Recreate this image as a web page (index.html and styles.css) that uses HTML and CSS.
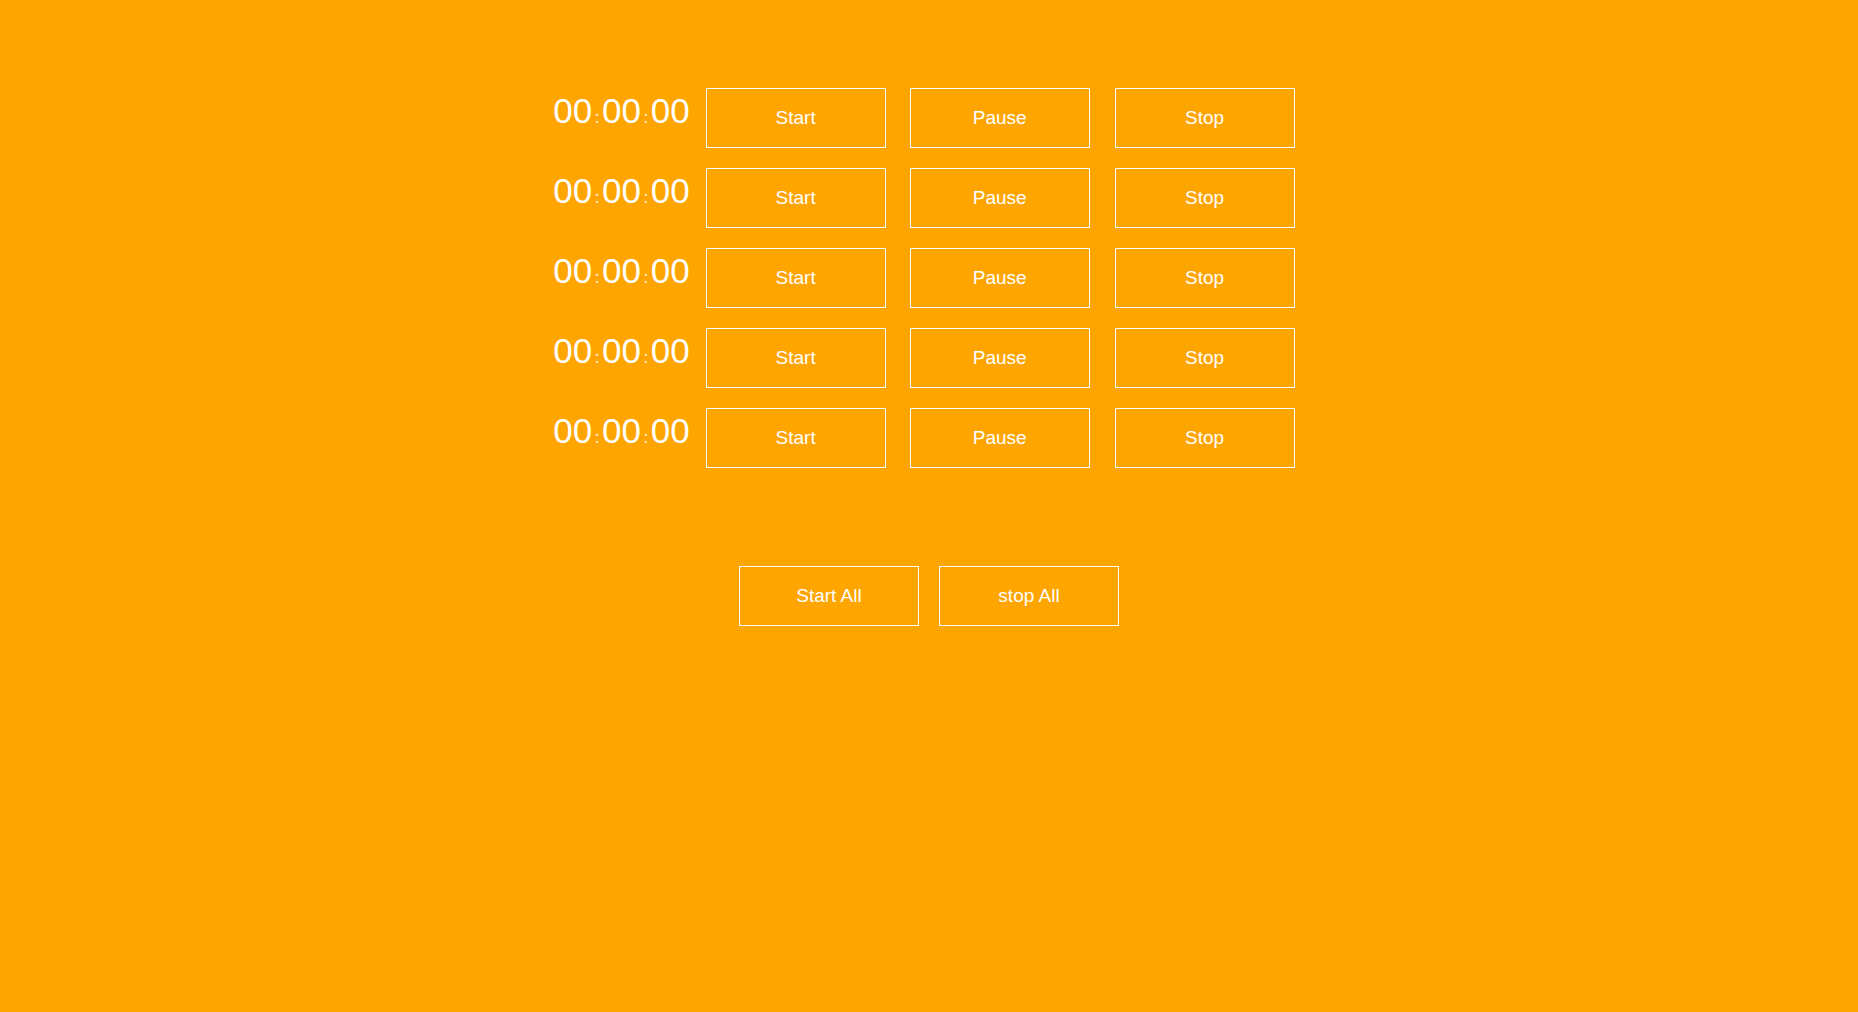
FILE: index.html
```html
<!DOCTYPE html>
<html lang="en">
<head>
<meta charset="utf-8">
<title>Timers</title>
<link rel="stylesheet" href="styles.css">
</head>
<body>
<main class="page">
  <section class="timers">
    <div class="row">
      <div class="time">00<span class="sep">:</span>00<span class="sep">:</span>00</div>
      <button class="btn">Start</button>
      <button class="btn">Pause</button>
      <button class="btn">Stop</button>
    </div>
    <div class="row">
      <div class="time">00<span class="sep">:</span>00<span class="sep">:</span>00</div>
      <button class="btn">Start</button>
      <button class="btn">Pause</button>
      <button class="btn">Stop</button>
    </div>
    <div class="row">
      <div class="time">00<span class="sep">:</span>00<span class="sep">:</span>00</div>
      <button class="btn">Start</button>
      <button class="btn">Pause</button>
      <button class="btn">Stop</button>
    </div>
    <div class="row">
      <div class="time">00<span class="sep">:</span>00<span class="sep">:</span>00</div>
      <button class="btn">Start</button>
      <button class="btn">Pause</button>
      <button class="btn">Stop</button>
    </div>
    <div class="row">
      <div class="time">00<span class="sep">:</span>00<span class="sep">:</span>00</div>
      <button class="btn">Start</button>
      <button class="btn">Pause</button>
      <button class="btn">Stop</button>
    </div>
  </section>
  <div class="all">
    <button class="btn">Start All</button>
    <button class="btn">stop All</button>
  </div>
</main>
</body>
</html>
```
FILE: styles.css
```css
html, body {
  margin: 0;
  padding: 0;
  height: 100%;
}
body {
  background: #FFA500;
  color: #fff;
  font-family: "Liberation Sans", Arial, sans-serif;
}
.page {
  padding-top: 88px;
}
.timers {
  display: flex;
  flex-direction: column;
  align-items: center;
  gap: 20px;
}
.row {
  display: flex;
  align-items: flex-start;
  padding-right: 10px;
}
.time {
  font-size: 35px;
  line-height: 40px;
  margin-top: 3px;
  margin-right: 16px;
  white-space: nowrap;
}
.sep {
  font-size: 17px;
  margin: 0 2.5px;
}
.btn {
  box-sizing: border-box;
  width: 180px;
  height: 60px;
  margin: 0;
  padding: 0;
  border: 1px solid #fff;
  background: transparent;
  color: #fff;
  font-family: "Liberation Sans", Arial, sans-serif;
  font-size: 19px;
}
.row .btn + .btn {
  margin-left: 24px;
}
.row .btn + .btn + .btn {
  margin-left: 25px;
}
.all {
  display: flex;
  justify-content: center;
  gap: 20px;
  margin-top: 98px;
}
```
